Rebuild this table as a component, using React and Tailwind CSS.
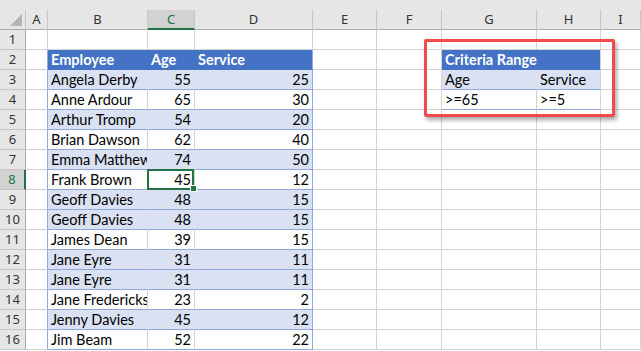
import React from "react";

const cols = ["A", "B", "C", "D", "E", "F", "G", "H", "I"];

const people = [
  ["Angela Derby", 55, 25, true],
  ["Anne Ardour", 65, 30, false],
  ["Arthur Tromp", 54, 20, true],
  ["Brian Dawson", 62, 40, false],
  ["Emma Matthews", 74, 50, true],
  ["Frank Brown", 45, 12, false],
  ["Geoff Davies", 48, 15, true],
  ["Geoff Davies", 48, 15, true],
  ["James Dean", 39, 15, false],
  ["Jane Eyre", 31, 11, true],
  ["Jane Eyre", 31, 11, true],
  ["Jane Fredericks", 23, 2, false],
  ["Jenny Davies", 45, 12, true],
  ["Jim Beam", 52, 22, false],
];

const grid = "grid grid-cols-[26px_22px_100px_47px_118px_64px_65px_95px_64px_1fr] h-[20px]";
const cell = "h-[20px] border-r border-b overflow-hidden whitespace-nowrap leading-[19px] px-[3px]";
const plain = "bg-white border-r-[#d4d4d4] border-b-[#d4d4d4]";

function RowHead({ n }) {
  const sel = n === 8;
  return (
    <div
      className={
        sel
          ? "h-[20px] bg-[#d2d2d2] border-b border-b-[#c6c6c6] border-r-2 border-r-[#217346] text-[#217346] text-[13px] leading-[19px] text-center font-['Noto_Sans',sans-serif]"
          : "h-[20px] bg-[#e6e6e6] border-b border-b-[#c6c6c6] border-r border-r-[#ababab] text-[#333] text-[13px] leading-[19px] text-center font-['Noto_Sans',sans-serif]"
      }
    >
      {n}
    </div>
  );
}

function Blank({ blueRight }) {
  return (
    <div
      className={
        blueRight
          ? cell + " bg-white border-r-[#8ea9db] border-b-[#d4d4d4]"
          : cell + " " + plain
      }
    />
  );
}

export default function App() {
  return (
    <div className="relative w-[641px] h-[351px] overflow-hidden bg-white font-['Lato',sans-serif] text-[14.5px] text-black">
      <div className="h-[10px] bg-[#e6e6e6]" />
      {/* column headers */}
      <div className={grid}>
        <div className="relative h-[20px] bg-[#e6e6e6] border-r border-b border-r-[#c6c6c6] border-b-[#ababab]">
          <svg className="absolute right-[3px] bottom-[3px]" width="12" height="12" viewBox="0 0 12 12">
            <polygon points="12,0 12,12 0,12" fill="#b4b4b4" />
          </svg>
        </div>
        {cols.map((c) =>
          c === "C" ? (
            <div
              key={c}
              className="h-[20px] bg-[#d2d2d2] border-r border-r-[#c6c6c6] border-b-2 border-b-[#217346] text-[#217346] text-[13px] leading-[19px] text-center font-['Noto_Sans',sans-serif]"
            >
              {c}
            </div>
          ) : (
            <div
              key={c}
              className="h-[20px] bg-[#e6e6e6] border-r border-b border-r-[#c6c6c6] border-b-[#ababab] text-[#333] text-[13px] leading-[19px] text-center font-['Noto_Sans',sans-serif]"
            >
              {c}
            </div>
          )
        )}
      </div>

      {/* row 1 */}
      <div className={grid}>
        <RowHead n={1} />
        {cols.map((c) => (
          <Blank key={c} />
        ))}
      </div>

      {/* row 2 */}
      <div className={grid}>
        <RowHead n={2} />
        <Blank blueRight />
        <div className={cell + " bg-[#4472c4] border-r-[#4472c4] border-b-[#4472c4] text-white font-bold"}>Employee</div>
        <div className={cell + " bg-[#4472c4] border-r-[#4472c4] border-b-[#4472c4] text-white font-bold"}>Age</div>
        <div className={cell + " bg-[#4472c4] border-r-[#8ea9db] border-b-[#4472c4] text-white font-bold"}>Service</div>
        <Blank />
        <Blank />
        <div className={cell + " bg-[#4472c4] border-r-[#4472c4] border-b-[#4472c4] text-white font-bold overflow-visible"}>
          <span className="relative z-10">Criteria Range</span>
        </div>
        <div className={cell + " bg-[#4472c4] border-r-[#d4d4d4] border-b-[#4472c4]"} />
        <Blank />
      </div>

      {people.map(([name, age, svc, band], i) => {
        const n = i + 3;
        const bc = band
          ? cell + " bg-[#d9e1f2] border-r-[#d9e1f2] border-b-[#8ea9db]"
          : cell + " bg-white border-r-[#d4d4d4] border-b-[#8ea9db]";
        const dc = band
          ? cell + " bg-[#d9e1f2] border-r-[#8ea9db] border-b-[#8ea9db] text-right"
          : cell + " bg-white border-r-[#8ea9db] border-b-[#8ea9db] text-right";
        return (
          <div key={n} className={grid}>
            <RowHead n={n} />
            <Blank blueRight />
            <div className={bc}>{name}</div>
            {n === 8 ? (
              <div className={bc + " text-right relative overflow-visible"}>
                {age}
                <div className="absolute left-[-1px] top-[-1px] w-[47px] h-[21px] border-2 border-[#217346]" />
                <div className="absolute right-[-3px] bottom-[-3px] w-[5px] h-[5px] bg-[#217346] border border-white box-content" />
              </div>
            ) : (
              <div className={bc + " text-right"}>{age}</div>
            )}
            <div className={dc}>{svc}</div>
            <Blank />
            <Blank />
            {n === 3 ? (
              <>
                <div className={cell + " bg-[#d9e1f2] border-r-[#d9e1f2] border-b-[#8ea9db]"}>Age</div>
                <div className={cell + " bg-[#d9e1f2] border-r-[#d4d4d4] border-b-[#8ea9db]"}>Service</div>
              </>
            ) : n === 4 ? (
              <>
                <div className={cell + " bg-white border-r-[#d4d4d4] border-b-[#8ea9db]"}>&gt;=65</div>
                <div className={cell + " bg-white border-r-[#d4d4d4] border-b-[#8ea9db]"}>&gt;=5</div>
              </>
            ) : (
              <>
                <Blank />
                <Blank />
              </>
            )}
            <Blank />
          </div>
        );
      })}

      {/* highlight around criteria range */}
      <div className="absolute left-[424px] top-[39px] w-[191px] h-[78px] border-[3px] border-[#ef4a50] rounded-[2px] shadow-[2px_3px_4px_rgba(0,0,0,0.35)] pointer-events-none" />
    </div>
  );
}
